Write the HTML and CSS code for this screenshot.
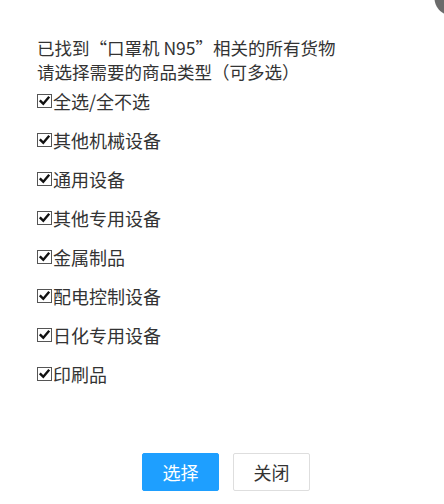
FILE: index.html
```html
<!DOCTYPE html>
<html lang="zh-CN">
<head>
    <meta charset="utf-8">
    <title>选择商品类型</title>
    <link rel="stylesheet" href="styles.css">
</head>
<body>

<section class="picker">
    <p class="intro">已找到“口罩机 N95”相关的所有货物<br>请选择需要的商品类型（可多选）</p>

    <ul class="types">
        <li><span class="box"><svg viewBox="0 0 14 14"><path d="M2.5 7.2 L5.6 10.3 L11.6 3.2"/></svg></span>全选/全不选</li>
        <li><span class="box"><svg viewBox="0 0 14 14"><path d="M2.5 7.2 L5.6 10.3 L11.6 3.2"/></svg></span>其他机械设备</li>
        <li><span class="box"><svg viewBox="0 0 14 14"><path d="M2.5 7.2 L5.6 10.3 L11.6 3.2"/></svg></span>通用设备</li>
        <li><span class="box"><svg viewBox="0 0 14 14"><path d="M2.5 7.2 L5.6 10.3 L11.6 3.2"/></svg></span>其他专用设备</li>
        <li><span class="box"><svg viewBox="0 0 14 14"><path d="M2.5 7.2 L5.6 10.3 L11.6 3.2"/></svg></span>金属制品</li>
        <li><span class="box"><svg viewBox="0 0 14 14"><path d="M2.5 7.2 L5.6 10.3 L11.6 3.2"/></svg></span>配电控制设备</li>
        <li><span class="box"><svg viewBox="0 0 14 14"><path d="M2.5 7.2 L5.6 10.3 L11.6 3.2"/></svg></span>日化专用设备</li>
        <li><span class="box"><svg viewBox="0 0 14 14"><path d="M2.5 7.2 L5.6 10.3 L11.6 3.2"/></svg></span>印刷品</li>
    </ul>
</section>

<footer class="actions">
    <button class="btn btn-primary">选择</button>
    <button class="btn">关闭</button>
</footer>

</body>
</html>
```
FILE: styles.css
```css
/* the grey dot in the top right corner is the dialog's close button, mostly off screen */
body { margin: 0; padding: 0; color: #333; font-family: "Noto Sans CJK SC", "Noto Sans", sans-serif; height: 504px; overflow: hidden;
    background: #fff radial-gradient(circle at 452px -2px, #6b6b6b 17px, #fff 18px) no-repeat; }
.picker { padding: 36px 0 0 37px; }
.intro { margin: 0; font-size: 17.5px; line-height: 24px; }
.intro .q { font-family: "Liberation Sans", sans-serif; }
.types { list-style: none; margin: 5px 0 0; padding: 0; display: flex; flex-direction: column; gap: 15px; }
.types li { display: flex; align-items: center; height: 24px; font-size: 18px; }
.box { width: 13px; height: 12px; border: 1px solid #555; margin-right: 1px; display: flex; background: #fff; }
.box svg { width: 13px; height: 12px; }
.box path { fill: none; stroke: #111; stroke-width: 2.8; stroke-linecap: square; }
.actions { display: flex; justify-content: center; gap: 14px; margin-top: 67px; padding-left: 8px; }
.btn { width: 77px; height: 38px; font-family: inherit; font-size: 18px; color: #333; background: #fff; border: 1px solid #dedede; border-radius: 2px; padding: 0; }
.btn-primary { background: #1e9fff; border-color: #1e9fff; color: #fff; }
```
